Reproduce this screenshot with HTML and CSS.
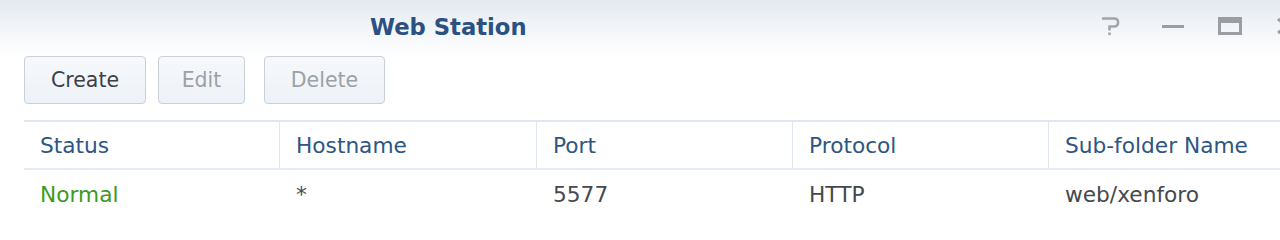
FILE: index.html
```html
<!DOCTYPE html>
<html>
<head>
<meta charset="utf-8">
<link rel="stylesheet" href="styles.css">
</head>
<body>
<div class="window">
  <div class="titlebar">
    <div class="title">Web Station</div>
    <div class="controls">
      <span class="ctl help"><svg width="24" height="20" viewBox="0 0 24 20"><path d="M4 2.5 H16 Q20 2.5 20 6 V7 Q20 10.5 16 10.5 H11.5 V14.5" fill="none" stroke="#a2a5aa" stroke-width="2.6"/><rect x="10.2" y="16.5" width="2.6" height="2.6" fill="#a2a5aa"/></svg></span>
      <span class="ctl min"><svg width="24" height="20" viewBox="0 0 24 20"><rect x="1" y="9" width="22" height="3" fill="#9a9da2"/></svg></span>
      <span class="ctl max"><svg width="24" height="20" viewBox="0 0 24 20"><rect x="1.5" y="2.5" width="21" height="15" fill="none" stroke="#9a9da2" stroke-width="3"/><rect x="1" y="2" width="22" height="5" fill="#9a9da2"/></svg></span>
      <span class="ctl close"><svg width="24" height="20" viewBox="0 0 24 20"><path d="M3 3 L21 17 M21 3 L3 17" stroke="#9a9da2" stroke-width="3"/></svg></span>
    </div>
  </div>
  <div class="toolbar">
    <button class="btn btn-create">Create</button>
    <button class="btn btn-edit disabled">Edit</button>
    <button class="btn btn-delete disabled">Delete</button>
  </div>
  <div class="grid">
    <div class="row head">
      <div class="cell">Status</div>
      <div class="cell">Hostname</div>
      <div class="cell">Port</div>
      <div class="cell">Protocol</div>
      <div class="cell">Sub-folder Name</div>
    </div>
    <div class="row data">
      <div class="cell ok">Normal</div>
      <div class="cell">*</div>
      <div class="cell">5577</div>
      <div class="cell">HTTP</div>
      <div class="cell">web/xenforo</div>
    </div>
  </div>
</div>
</body>
</html>
```
FILE: styles.css
```css
html, body {
  margin: 0;
  padding: 0;
  background: #ffffff;
  overflow: hidden;
}
body {
  font-family: "DejaVu Sans", Verdana, sans-serif;
  width: 1280px;
  height: 216px;
}
.window {
  width: 1280px;
  height: 216px;
  background: linear-gradient(to bottom, #e4e9f0 0px, #f3f6f9 30px, #ffffff 58px, #ffffff 100%);
}
.titlebar {
  height: 50px;
  display: flex;
  align-items: center;
}
.title {
  margin-left: 370px;
  margin-top: 3px;
  font-size: 22.7px;
  font-weight: bold;
  color: #2a5181;
}
.controls {
  margin-left: auto;
  display: flex;
  align-items: center;
  gap: 33px;
  margin-right: -19px;
  margin-top: 2px;
}
.ctl {
  display: flex;
  align-items: center;
  justify-content: center;
  width: 24px;
  height: 20px;
}
.help { margin-right: 6px; }
.toolbar {
  display: flex;
  align-items: flex-start;
  padding: 6px 0 0 24px;
  height: 70px;
  box-sizing: border-box;
  gap: 12px;
}
.btn {
  height: 48px;
  border: 1px solid #c9d0d9;
  border-radius: 4px;
  background: linear-gradient(to bottom, #f6f8fb, #edf2f8);
  font-family: "DejaVu Sans", Verdana, sans-serif;
  font-size: 20.5px;
  color: #3b4046;
  padding: 0;
}
.btn-create { width: 122px; }
.btn-edit { width: 87px; }
.btn-delete { width: 121px; margin-left: 7px; }
.btn.disabled { color: #9ca1a7; }
.grid {
  margin-left: 24px;
  border-top: 2px solid #dfe6ef;
}
.row {
  display: grid;
  grid-template-columns: 256px 257px 256px 256px 256px;
}
.row.head {
  height: 46px;
  border-bottom: 2px solid #e6ecf3;
}
.row.head .cell {
  color: #2e5682;
  border-right: 1px solid #dfe6ef;
}
.row.data {
  height: 48px;
}
.cell {
  display: flex;
  align-items: center;
  padding-left: 16px;
  font-size: 21.7px;
  color: #45494e;
  white-space: nowrap;
}
.cell.ok { color: #3c9a1f; }
```
